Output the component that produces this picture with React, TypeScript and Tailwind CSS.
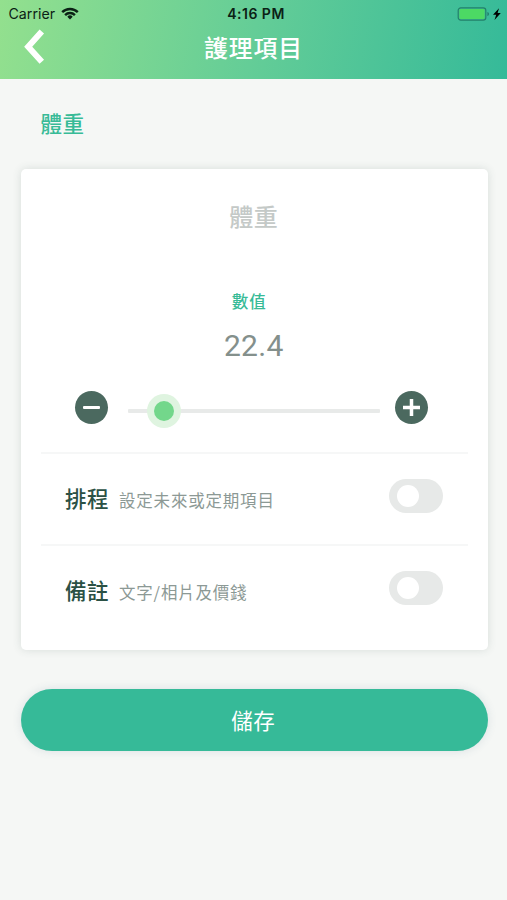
import { useState } from 'react';

interface ToggleRowProps {
  title: string;
  hint: string;
  checked: boolean;
  onChange: (checked: boolean) => void;
}

const MIN = 0;
const MAX = 157;

function StatusBar() {
  return (
    <div className="relative flex h-[27px] items-center justify-between pl-[8.5px] pr-[6px] text-[#0b2115]">
      <div className="flex items-center gap-[6px]">
        <span className="font-['Inter'] text-[14.2px] leading-[27px]">Carrier</span>
        <svg width="18" height="13" viewBox="0 0 18 13" fill="none" stroke="currentColor" strokeWidth="2.4">
          <path d="M1.2 5.2a11 11 0 0 1 15.6 0" />
          <path d="M4.1 8.1a6.9 6.9 0 0 1 9.8 0" />
          <path d="M9 12.4 6.3 9.7a3.8 3.8 0 0 1 5.4 0z" fill="currentColor" stroke="none" />
        </svg>
      </div>
      <span className="absolute inset-x-0 top-0 pl-[5px] text-center font-['Inter'] text-[14px] font-semibold leading-[27px] tracking-[0.5px]">
        4:16 PM
      </span>
      <svg width="44" height="14" viewBox="0 0 44 14">
        <rect x="1.2" y="0.8" width="27.6" height="12.4" rx="2.6" fill="none" stroke="#23806a" strokeWidth="1.2" />
        <rect x="2.4" y="2" width="25.2" height="10" rx="1.4" fill="#4cd964" />
        <path d="M30.4 5v4c1-.4 1.6-1.1 1.6-2s-.6-1.6-1.6-2z" fill="#23806a" />
        <path d="M42 1.2 36 7.8h3.2L37.5 13l6.3-7h-3.2z" fill="#000" />
      </svg>
    </div>
  );
}

function ToggleRow({ title, hint, checked, onChange }: ToggleRowProps) {
  return (
    <div className="mx-5 flex h-[92px] items-start justify-between border-t-2 border-[#f6f7f7] pl-[24.5px] pr-[25px]">
      <div className="flex items-baseline pt-[28px]">
        <span className="text-[21.5px] font-medium leading-[32px] tracking-[0.5px] text-[#2b5145]">{title}</span>
        <span className="ml-[10px] text-[16.5px] leading-[32px] tracking-[0.8px] text-[#8c9995]">{hint}</span>
      </div>
      <button
        type="button"
        role="switch"
        aria-checked={checked}
        onClick={() => onChange(!checked)}
        className={`mt-[24.5px] flex h-[34px] w-[54px] items-center rounded-full px-[7.5px] ${
          checked ? 'justify-end bg-[#76d98c]' : 'justify-start bg-[#e7e9e8]'
        }`}
      >
        <span className="size-[22px] rounded-full bg-white" />
      </button>
    </div>
  );
}

export default function App() {
  const [value, setValue] = useState(22.4);
  const [scheduled, setScheduled] = useState(false);
  const [noted, setNoted] = useState(false);

  const percent = ((value - MIN) / (MAX - MIN)) * 100;

  return (
    <div className="min-h-screen bg-[#f5f7f5] font-['Noto_Sans_CJK_TC',sans-serif]">
      {/* Header */}
      <header className="h-[79px] bg-linear-[100deg,#93e08e_0%,#64cd97_50%,#35ba99_100%]">
        <StatusBar />
        <div className="grid h-[39px] grid-cols-[60px_1fr_60px] items-center">
          <button type="button" aria-label="返回" className="pl-[23px]">
            <svg width="22" height="36" viewBox="0 0 22 36" fill="none" stroke="#fff" strokeWidth="6">
              <path d="M18.8 2.6 5.2 17.7l13.6 15.1" />
            </svg>
          </button>
          <h1 className="text-center text-[23.8px] font-medium leading-[39px] tracking-[0.9px] text-white">護理項目</h1>
        </div>
      </header>

      <main className="pl-[20.5px] pr-[19px]">
        <h2 className="pl-5 pt-[28px] text-[21.5px] font-medium leading-[32px] tracking-[0.5px] text-[#38bb97]">體重</h2>

        {/* Value card */}
        <section className="mt-[30px] h-[481px] rounded-[5px] bg-white pt-[29px] shadow-[0_0_8px_rgba(60,90,80,0.16)]">
          <h3 className="pr-[1px] text-center text-[24px] font-medium leading-[36px] tracking-[0.5px] text-[#c4c9c7]">
            體重
          </h3>
          <div className="mt-[55px] pr-[10px] text-center text-[16.5px] font-medium leading-[24px] tracking-[1px] text-[#38bb97]">
            數值
          </div>
          <div className="mt-[12px] pr-[1px] text-center font-['Roboto'] text-[30px] leading-[42px] tracking-[0.3px] text-[#84908c]">
            {value.toFixed(1)}
          </div>

          <div className="mt-[24px] flex h-[33px] items-center pl-[54px] pr-[60px]">
            <button
              type="button"
              aria-label="減少"
              onClick={() => setValue(Math.max(MIN, value - 0.1))}
              className="flex size-[33px] items-center justify-center rounded-full bg-[#4b695f]"
            >
              <span className="h-[3px] w-[17px] rounded-[1px] bg-white" />
            </button>
            <div className="relative ml-[20px] mt-[6px] h-[4px] flex-1 rounded-[1px] bg-[#e8eae9]">
              <div
                className="absolute top-1/2 flex size-[34px] -translate-x-1/2 -translate-y-1/2 items-center justify-center rounded-full bg-[#dff4e0]"
                style={{ left: `${percent}%` }}
              >
                <span className="size-[20px] rounded-full bg-[#73d78b]" />
              </div>
            </div>
            <button
              type="button"
              aria-label="增加"
              onClick={() => setValue(Math.min(MAX, value + 0.1))}
              className="ml-[15px] flex size-[33px] items-center justify-center rounded-full bg-[#4b695f]"
            >
              <svg width="17" height="17" viewBox="0 0 17 17" stroke="#fff" strokeWidth="3.5">
                <path d="M8.5 0v17M0 8.5h17" />
              </svg>
            </button>
          </div>

          <div className="mt-[28px]">
            <ToggleRow title="排程" hint="設定未來或定期項目" checked={scheduled} onChange={setScheduled} />
            <ToggleRow title="備註" hint="文字/相片及價錢" checked={noted} onChange={setNoted} />
          </div>
        </section>

        <button
          type="button"
          className="mt-[38.5px] h-[62.5px] w-full rounded-full bg-[#36ba98] pr-[2px] text-[21.5px] leading-[32px] tracking-[0.5px] text-white shadow-[0_0_10px_rgba(60,90,120,0.14)]"
        >
          儲存
        </button>
      </main>
    </div>
  );
}
